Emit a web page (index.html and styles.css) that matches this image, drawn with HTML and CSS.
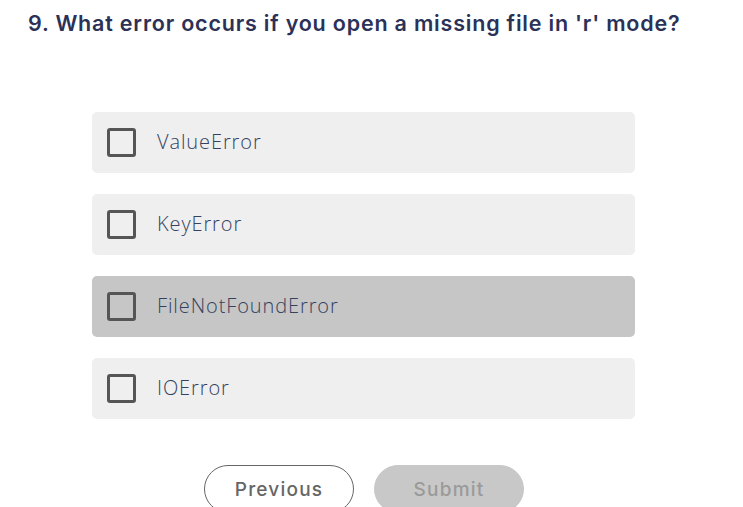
FILE: index.html
```html
<!DOCTYPE html>
<html>
<head>
<meta charset="utf-8">
<link rel="stylesheet" href="styles.css">
</head>
<body>
<div class="quiz">
  <h1 class="question">9. What error occurs if you open a missing file in 'r' mode?</h1>
  <div class="options">
    <label class="option"><span class="box"></span><span class="label">ValueError</span></label>
    <label class="option"><span class="box"></span><span class="label">KeyError</span></label>
    <label class="option hovered"><span class="box"></span><span class="label">FileNotFoundError</span></label>
    <label class="option"><span class="box"></span><span class="label">IOError</span></label>
  </div>
  <div class="actions">
    <button class="btn prev">Previous</button>
    <button class="btn submit">Submit</button>
  </div>
</div>
</body>
</html>
```
FILE: styles.css
```css
html, body {
  margin: 0;
  padding: 0;
  background: #ffffff;
  overflow: hidden;
}
.quiz {
  padding: 8px 0 0 28px;
}
.question {
  margin: 0;
  font-family: Inter, "Open Sans", sans-serif;
  font-weight: 600;
  font-size: 21.5px;
  line-height: 30px;
  color: #2b3157;
  letter-spacing: 0.8px;
}
.options {
  display: flex;
  flex-direction: column;
  gap: 21px;
  margin: 74px 0 0 64px;
  width: 543px;
}
.option {
  display: flex;
  align-items: center;
  height: 61px;
  background: #efefef;
  border-radius: 5px;
  padding-left: 15px;
  box-sizing: border-box;
}
.option.hovered {
  background: #c6c6c6;
}
.box {
  width: 29px;
  height: 29px;
  box-sizing: border-box;
  border: 3px solid #555555;
  border-radius: 3px;
  background: transparent;
  flex: none;
}
.label {
  margin-left: 21px;
  margin-bottom: 3px;
  font-family: "Open Sans", sans-serif;
  font-size: 20px;
  font-weight: 350;
  letter-spacing: 0.9px;
  color: #34425f;
}
.actions {
  display: flex;
  gap: 20px;
  margin: 46px 0 0 176px;
}
.btn {
  width: 150px;
  height: 48px;
  border-radius: 24px;
  font-family: Inter, "Open Sans", sans-serif;
  font-size: 19px;
  font-weight: 500;
  letter-spacing: 1.2px;
  padding: 0;
  box-sizing: border-box;
}
.prev {
  background: #ffffff;
  border: 1px solid #666666;
  color: #666666;
}
.submit {
  background: #c8c8c8;
  border: 1px solid #c8c8c8;
  color: #9a9a9a;
}
```
